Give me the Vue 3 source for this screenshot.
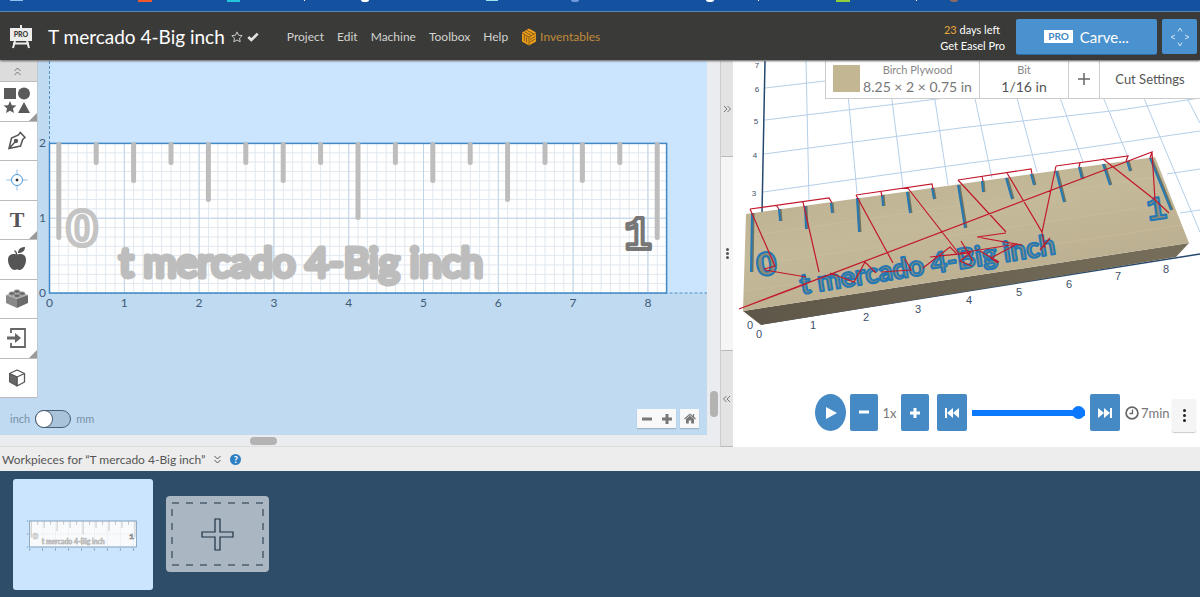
<script setup>
import { ref } from 'vue'

const title = 'T mercado 4-Big inch'
const menu = ['Project', 'Edit', 'Machine', 'Toolbox', 'Help']
const metric = ref(false)
const progress = ref(100)

const X0 = 49.5
const Y0 = 232
const UNIT = 74.8
const TOP = Y0 - 2 * UNIT

const minorX = Array.from({ length: 65 }, (_, i) => X0 + ((i + 1) * UNIT) / 8)
const minorY = Array.from({ length: 15 }, (_, i) => Y0 - ((i + 1) * UNIT) / 8)
const majorX = Array.from({ length: 8 }, (_, i) => X0 + (i + 1) * UNIT)
const lengths = [97, 22, 40, 22, 59, 22, 40, 22, 77, 22, 40, 22, 59, 22, 40, 22, 97]
const marks = lengths.map((l, i) => ({ x: 58.8 + i * 37.4, end: TOP + l - 3 }))

const sceneGrid = [
  'M32 27L92 20', 'M32 59L237 34', 'M31 93L227 67L387 49L467 37', 'M30 131L237 102L344 88L467 70',
  'M434 113L467 108', 'M447 152L467 149', 'M73 0L76 139', 'M112 0L124 132', 'M154 0L170 126',
  'M196 0L215 124', 'M234 0L259 117', 'M274 0L304 111', 'M314 0L350 101', 'M355 0L395 96',
  'M397 0L411 37L427 76L467 171', 'M436 0L454 37L467 62'
].join('')
const cuts = [
  'M19 152L18 211', 'M46 148L47 160', 'M72 145L73 168', 'M98 142L99 152', 'M124 137L126 171',
  'M149 134L150 145', 'M174 131L177 152', 'M199 127L201 138', 'M225 124L232 167', 'M249 120L250 131',
  'M273 117L279 138', 'M298 113L301 124', 'M323 110L331 141', 'M346 106L349 118', 'M370 103L377 124',
  'M394 100L397 110', 'M417 97L438 149'
].join('')
const travel = [
  'M6 248L419 91L417 97', 'M6 248L73 223', 'M17 148L96 137L99 142', 'M43 144L46 148', 'M17 148L42 205L31 208',
  'M32 209L73 216', 'M70 141L86 211', 'M123 134L199 123L200 128', 'M148 131L149 135', 'M123 134L160 202',
  'M174 126L227 194', 'M225 119L298 108L299 113', 'M249 115L250 120', 'M225 119L273 171', 'M274 112L309 171L323 105',
  'M323 105L395 95L393 100', 'M347 102L346 106', 'M370 98L422 139L436 152', 'M419 91L422 139',
  'M97 212L121 221L132 201L143 212', 'M148 211L178 209L172 198', 'M190 207L217 186L224 193L197 196',
  'M197 196L237 192L227 200L239 205', 'M244 176L273 172L244 176L289 184', 'M227 192L284 183L258 197L265 202',
  'M228 180L240 200', 'M307 189L317 177', 'M309 171L312 187', 'M247 190L266 201'
].join('')
const heights = [
  { n: 7, x: 24, y: 7 }, { n: 6, x: 24, y: 31 }, { n: 5, x: 23, y: 63 }, { n: 4, x: 22, y: 97 }, { n: 3, x: 21, y: 135 }
]
const widths = [
  { n: 0, x: 17, y: 268 }, { n: 0, x: 26, y: 277 }, { n: 1, x: 80, y: 268 }, { n: 2, x: 133, y: 260 },
  { n: 3, x: 185, y: 252 }, { n: 4, x: 236, y: 243 }, { n: 5, x: 286, y: 235 }, { n: 6, x: 336, y: 227 },
  { n: 7, x: 385, y: 219 }, { n: 8, x: 433, y: 212 }
]
</script>

<template>
  <div class="app">
    <div class="strip" aria-hidden="true">
      <svg width="100%" height="12">
        <rect x="10" width="13" height="1" fill="#8fc2ee" />
        <rect x="138" width="14" height="2" fill="#f2562b" />
        <rect x="227" width="13" height="2" fill="#21c7d8" />
        <ellipse cx="365" cy="0" rx="4" ry="2" fill="#fff" />
        <rect x="304" width="1" height="1" fill="#fff" />
        <rect x="486" width="12" height="1" fill="#9ee0ec" />
        <ellipse cx="575" cy="0" rx="4" ry="2" fill="#6f9ae0" />
        <ellipse cx="710" cy="0" rx="4" ry="2" fill="#fff" />
        <rect x="758" width="1" height="1" fill="#fff" />
        <rect x="836" width="14" height="2" fill="#8fcf3c" />
        <rect x="916" width="1" height="1" fill="#fff" />
        <ellipse cx="954" cy="0" rx="4" ry="2" fill="#8a6a62" />
      </svg>
    </div>

    <header class="header">
      <svg class="logo" width="24" height="26" viewBox="0 0 24 26">
        <path d="M11 1h2v4h-2zM1 4h22v13H1zM4 18.500h16v2H4z" fill="#ededeb" />
        <path d="M6 17L4 24M18 17l2 7" stroke="#ededeb" stroke-width="2" />
        <text x="12" y="13" text-anchor="middle" class="logo-text">PRO</text>
      </svg>
      <h1 class="title">{{ title }}</h1>
      <button class="plain" aria-label="Favorite">
        <svg width="12" height="12" viewBox="0 0 12 12"><path d="M6 .9l1.500 3.300 3.700.4-2.700 2.500.7 3.700L6 9l-3.200 1.800.7-3.700L.8 4.600l3.700-.4z" fill="none" stroke="#c9c9c7" /></svg>
      </button>
      <svg class="check" width="12" height="10" viewBox="0 0 12 10"><path d="M1.300 5l3 3L10.700 1.600" fill="none" stroke="#e4e4e2" stroke-width="2.600" /></svg>
      <nav class="menu">
        <a v-for="m in menu" :key="m" href="#">{{ m }}</a>
        <a href="#" class="brand">
          <svg width="16" height="18" viewBox="0 0 16 18">
            <path d="M8 .5l7 4v9l-7 4-7-4v-9z" fill="#f0a018" />
            <path d="M8 9v8M8 9l7-4M8 9L1 5M3.300 7v6M5.600 8.500v6M3.500 3.600l6.500 3.700M6 2.300l6.500 3.600M9 11.500l5.500-3.200M9 14l5.500-3.200" stroke="#65481d" stroke-width=".8" fill="none" />
          </svg>
          <span>Inventables</span>
        </a>
      </nav>
      <div class="trial">
        <span><b>23</b> days left</span>
        <a href="#">Get Easel Pro</a>
      </div>
      <button class="carve"><span class="badge">PRO</span>Carve...</button>
      <button class="jog" aria-label="Jog machine">
        <svg width="20" height="20" viewBox="0 0 20 20"><path d="M8 4.500l2-3.500 2 3.500M8 15.500l2 3.500 2-3.500M5 8l-4 2 4 2M15 8l4 2-4 2" fill="none" stroke="#cde4f7" /></svg>
      </button>
    </header>

    <main class="work">
      <section class="editor">
        <div class="canvas">
          <svg class="drawing" width="100%" height="100%">
            <rect :x="X0" y="0" width="100%" :height="Y0" fill="#cbe5ff" />
            <path :d="`M${X0} 0V${TOP}`" class="guide" />
            <line :x1="X0" :x2="'100%'" :y1="Y0" :y2="Y0" class="guide" />
            <g id="board">
              <rect :x="X0" :y="TOP" :width="8.25 * UNIT" :height="2 * UNIT" fill="#fff" />
              <path v-for="x in minorX" :key="'x' + x" :d="`M${x} ${TOP}V${Y0}`" class="minor" />
              <path v-for="y in minorY" :key="'y' + y" :d="`M${X0} ${y}H${X0 + 8.25 * UNIT}`" class="minor" />
              <path v-for="x in majorX" :key="'m' + x" :d="`M${x} ${TOP}V${Y0}`" class="major" />
              <path :d="`M${X0} ${Y0 - UNIT}H${X0 + 8.25 * UNIT}`" class="major" />
              <rect :x="X0" :y="TOP" :width="8.25 * UNIT" :height="2 * UNIT" class="edge" />
              <path v-for="m in marks" :key="m.x" :d="`M${m.x} ${TOP + 1}V${m.end}`" class="mark" />
              <text x="82" y="184" text-anchor="middle" class="zero">0</text>
              <text x="638" y="188" text-anchor="middle" class="one">1</text>
              <text x="301" y="216" text-anchor="middle" class="carved">t mercado 4-Big inch</text>
            </g>
            <g class="axis">
              <text v-for="n in 9" :key="n" :x="X0 + (n - 1) * UNIT" :y="Y0 + 14" text-anchor="middle">{{ n - 1 }}</text>
              <text v-for="n in 3" :key="'v' + n" x="46" :y="Y0 - (n - 1) * UNIT + 4" text-anchor="end">{{ n - 1 }}</text>
            </g>
          </svg>

          <div class="tools">
            <button class="collapse" aria-label="Collapse tools">
              <svg width="9" height="9" viewBox="0 0 9 9"><path d="M1.500 4l3-3 3 3M1.500 8l3-3 3 3" fill="none" stroke="#777" /></svg>
            </button>
            <button class="more" aria-label="Shapes">
              <svg width="28" height="28" viewBox="0 0 28 28" fill="#5a5a5a"><path d="M1 1h12v11H1zM21 15l6 11H15zM7 14l1.800 4.200 4.600.4-3.500 3 1.100 4.500L7 23.700l-4 2.400 1.100-4.500-3.500-3 4.600-.4z" /><circle cx="21" cy="6.500" r="6" /></svg>
            </button>
            <button aria-label="Pen">
              <svg width="20" height="20" viewBox="0 0 20 20" fill="none" stroke="#555" stroke-width="1.500"><path d="M2 17.500L4.500 7l7-3 1.800-2.500L18 6.500 15.700 8.500l-2.200 6.500zM2 17.500l6-6.500" /><circle cx="9" cy="10" r="1.400" fill="#555" /></svg>
            </button>
            <button aria-label="Point">
              <svg width="22" height="22" viewBox="0 0 22 22" fill="none" stroke="#4b97d8"><circle cx="11" cy="11" r="5.500" /><path d="M11 .5v5M11 16.500v5M.5 11h5M16.500 11h5" opacity=".6" /><circle cx="11" cy="11" r="1" fill="#222" stroke="#222" /></svg>
            </button>
            <button class="more letter" aria-label="Text">T</button>
            <button aria-label="Icons">
              <svg width="20" height="26" viewBox="0 0 20 26" fill="#555"><path d="M10 9c2-1.500 9-2 9 5 0 5-3.500 10-6.500 10-1 0-1.500-.5-2.500-.5S8.500 24 7.500 24C4.500 24 1 19 1 14c0-7 7-6.500 9-5z" /><path d="M11 7c0-4 3-6 7-6 0 4-3 6-7 6z" /><path d="M10 9C9.500 7 9 5.500 7.500 4.500" fill="none" stroke="#555" stroke-width="1.500" /></svg>
            </button>
            <button aria-label="Apps">
              <svg width="24" height="20" viewBox="0 0 24 20"><path d="M1 6l11-4 11 4-11 4z" fill="#aaa" /><path d="M1 6l11 4v9L1 14z" fill="#888" /><path d="M23 6l-11 4v9l11-5z" fill="#6a6a6a" /><g fill="#666" stroke="#aaa" stroke-width=".7"><ellipse cx="12" cy="2.500" rx="3" ry="1.700" /><ellipse cx="7" cy="4.500" rx="3" ry="1.700" /><ellipse cx="17" cy="4.500" rx="3" ry="1.700" /><ellipse cx="12" cy="6.800" rx="3" ry="1.700" /></g></svg>
            </button>
            <button class="more" aria-label="Import">
              <svg width="20" height="20" viewBox="0 0 20 20"><path d="M4 5V1h14v18H4v-4" fill="none" stroke="#666" stroke-width="1.800" /><path d="M0 8.500h8V5l6 5-6 5v-3.500H0z" fill="#666" /></svg>
            </button>
            <button aria-label="3D">
              <svg width="18" height="18" viewBox="0 0 18 18"><path d="M9 1l7.500 3.500L9 8 1.500 4.500zM9 8v9l7.500-4V4.500" fill="#fff" stroke="#555" stroke-width="1.300" stroke-linejoin="round" /><path d="M1.500 4.500L9 8v9l-7.500-4z" fill="#666" stroke="#555" /></svg>
            </button>
          </div>

          <label class="units"><span>inch</span><input v-model="metric" type="checkbox" role="switch" /><span>mm</span></label>

          <div class="zoom">
            <div class="pair">
              <button aria-label="Zoom out"><svg width="10" height="10"><path d="M0 5h10" stroke="#777" stroke-width="3" /></svg></button>
              <button aria-label="Zoom in"><svg width="10" height="10"><path d="M0 5h10M5 0v10" stroke="#777" stroke-width="3" /></svg></button>
            </div>
            <button aria-label="Zoom home"><svg width="12" height="11" viewBox="0 0 12 11" fill="#777"><path d="M2 6l4-3.300L10 6v4.500H7.200V7.500H4.800v3H2z" /><path d="M.5 6L6 1.300 11.500 6M9.500 1v3" fill="none" stroke="#777" stroke-width="1.200" /></svg></button>
          </div>
        </div>
        <div class="vscroll"><i></i></div>
        <div class="hscroll"><i></i></div>
      </section>

      <div class="divider">
        <button class="end" aria-label="Expand editor"><svg width="8" height="8" viewBox="0 0 8 8"><path d="M1 1l3 3-3 3M4.500 1l3 3-3 3" fill="none" stroke="#777" /></svg></button>
        <div class="grip"><i></i><i></i><i></i></div>
        <button class="end" aria-label="Expand preview"><svg width="8" height="8" viewBox="0 0 8 8"><path d="M3.500 1l-3 3 3 3M7 1L4 4l3 3" fill="none" stroke="#777" /></svg></button>
      </div>

      <section class="preview">
        <svg class="scene" width="100%" height="100%">
          <defs>
            <linearGradient id="top" x1="0" y1="0" x2=".6" y2="1"><stop offset="0" stop-color="#b9ad8d" /><stop offset=".5" stop-color="#c4b999" /><stop offset="1" stop-color="#b8ac8e" /></linearGradient>
            <linearGradient id="side" x1="0" x2="1"><stop offset="0" stop-color="#5e5749" /><stop offset="1" stop-color="#776e5a" /></linearGradient>
          </defs>
          <path :d="sceneGrid" fill="none" stroke="#b5cfe8" />
          <path d="M32 0L29 152M28 263L467 193" stroke="#24486e" stroke-width="1.500" />
          <path d="M10 250L456 182L443 196L28 264z" fill="url(#side)" />
          <path d="M13 153L422 96L456 182L10 250z" fill="url(#top)" />
          <path d="M16 175L429 115M14 205L440 142M12 230L449 164" stroke="#d4c8aa" opacity=".35" />
          <path :d="cuts" stroke="#6f7463" stroke-width="3" transform="translate(1 0)" />
          <path :d="cuts" stroke="#2679b3" stroke-width="2" />
          <g class="engraved">
            <text x="35" y="214" text-anchor="middle" transform="rotate(-8 35 214)" class="e-zero">0</text>
            <text x="425" y="158" text-anchor="middle" transform="rotate(-8 425 158)" class="e-one">1</text>
            <text x="196" y="213" text-anchor="middle" transform="rotate(-9 196 213)" class="e-name">t mercado 4-Big inch</text>
          </g>
          <path :d="travel" fill="none" stroke="#c2182b" stroke-width="1.200" />
          <g class="ticks">
            <text v-for="h in heights" :key="h.n" :x="h.x" :y="h.y" text-anchor="middle" class="small">{{ h.n }}</text>
            <text v-for="w in widths" :key="w.x" :x="w.x" :y="w.y" text-anchor="middle">{{ w.n }}</text>
          </g>
        </svg>

        <div class="setup">
          <button class="material"><i class="swatch"></i><span><small>Birch Plywood</small><strong>8.25 × 2 × 0.75 in</strong></span></button>
          <button class="bit"><small>Bit</small><strong>1/16 in</strong></button>
          <button class="add-bit" aria-label="Add bit"><svg width="12" height="12"><path d="M0 6h12M6 0v12" stroke="#666" stroke-width="1.500" /></svg></button>
          <button class="cut">Cut Settings</button>
        </div>

        <div class="player">
          <button class="play" aria-label="Play"><svg width="12" height="12"><path d="M1 0l11 6-11 6z" fill="#fff" /></svg></button>
          <button aria-label="Slower"><svg width="10" height="10"><path d="M0 4h10" stroke="#fff" stroke-width="3" /></svg></button>
          <span class="speed">1x</span>
          <button aria-label="Faster"><svg width="10" height="10"><path d="M0 5h10M5 0v10" stroke="#fff" stroke-width="3" /></svg></button>
          <button class="wide" aria-label="To start"><svg width="14" height="12"><path d="M0 1h2v10H0zM8 1v10L2 6zM14 1v10L8 6z" fill="#fff" /></svg></button>
          <input v-model="progress" type="range" min="0" max="100" aria-label="Progress" />
          <button class="ff" aria-label="To end"><svg width="14" height="12"><path d="M12 1h2v10h-2zM6 1v10l6-5zM0 1v10l6-5z" fill="#fff" /></svg></button>
          <svg class="clock" width="14" height="14" viewBox="0 0 14 14" fill="none" stroke="#666"><circle cx="7" cy="7" r="5.900" stroke-width="1.700" /><path d="M7.500 3.500v4h-3" stroke-width="1.300" /></svg>
          <span class="time">7min</span>
          <button class="kebab" aria-label="More"><i></i><i></i><i></i></button>
        </div>
      </section>
    </main>

    <div class="pieces-bar">
      <span>Workpieces for “T mercado 4-Big inch”</span>
      <button class="plain" aria-label="Toggle workpieces"><svg width="9" height="9" viewBox="0 0 9 9"><path d="M1.500 1l3 3 3-3M1.500 5l3 3 3-3" fill="none" stroke="#555" /></svg></button>
      <button class="help" aria-label="Help">?</button>
    </div>

    <footer class="pieces">
      <button class="thumb" aria-label="Workpiece 1">
        <svg width="140" height="111" viewBox="-46 -160 807 640"><use href="#board" /><path d="M42 82.400h-8M42 157h-8M42 232h-8M50 240v12M124 240v12M199 240v12M274 240v12M349 240v12M423 240v12M498 240v12M573 240v12M648 240v12" stroke="#7b97b5" stroke-width="6" /><rect x="49" y="82" width="617" height="150" fill="none" stroke="#8ba5bb" stroke-width="5" /></svg>
      </button>
      <button class="new" aria-label="Add workpiece">
        <svg width="103" height="76" viewBox="0 0 103 76" fill="none" stroke="#1d3042"><path d="M6 7h92M6 69h92" stroke-dasharray="7 7" /><path d="M6 13v56M97 13v56" stroke-dasharray="7 7" /><path d="M49 23h5v13h13v5H54v13h-5V41H36v-5h13z" stroke-width="1.200" /></svg>
      </button>
    </footer>
  </div>
</template>

<style>
html, body, #app { height: 100%; }
body { margin: 0; overflow: hidden; }
</style>

<style scoped>
* { box-sizing: border-box; }
.app { height: 100%; display: flex; flex-direction: column; font-family: Lato, "Liberation Sans", sans-serif; color: #555; background: #fff; }
button { font: inherit; color: inherit; border: 0; padding: 0; margin: 0; background: none; display: flex; align-items: center; justify-content: center; cursor: pointer; }
a { color: inherit; text-decoration: none; }
svg { display: block; flex: none; }
.strip { height: 12px; background: #14529f; border-bottom: 1px solid #5b8ac0; }
.header { height: 48px; display: flex; align-items: center; padding: 1px 3px 0 9px; color: #d2d2d0; background: #3a3b38; box-shadow: 0 1px 2px #555; position: relative; z-index: 2; }
.logo-text { font: 900 7px Lato, sans-serif; fill: #3a3b38; }
.title { margin: 0 6px 0 15px; font-size: 19px; line-height: 24px; font-weight: 400; color: #fff; white-space: nowrap; }
.check { margin-left: 4px; }
.menu { display: flex; align-items: center; gap: 13px; margin-left: 28px; font-size: 12px; white-space: nowrap; }
.brand { display: flex; align-items: center; gap: 3px; color: #c08b3a; }
.trial { margin-left: auto; margin-right: 11px; padding-top: 2px; display: flex; flex-direction: column; align-items: flex-end; font-size: 11px; line-height: 16px; color: #fff; white-space: nowrap; }
.trial span { margin-right: 5px; }
.trial b { font-weight: 400; color: #e8a33d; }
.carve { width: 141px; height: 35px; gap: 7px; font-size: 15px; color: #fff; background: #4a92cf; box-shadow: 0 1px 0 #2b6da5; border-radius: 2px; }
.badge { padding: 0 4px; line-height: 13px; font-size: 10px; font-weight: 700; color: #3f86c4; background: #fff; }
.jog { width: 35px; height: 35px; margin-left: 5px; background: #4a92cf; border-radius: 2px; }
.work { flex: 1; min-height: 0; display: flex; padding-top: 1px; }
.editor { flex: 720; min-width: 0; display: grid; grid-template: minmax(0, 1fr) 12px / minmax(0, 1fr) 13px; background: #ebecef; }
.canvas { position: relative; background: #c0daf1; overflow: hidden; display: flex; flex-direction: column; align-items: flex-start; }
.drawing { position: absolute; inset: 0; }
.guide { stroke: #4f8fc4; stroke-dasharray: 3 2; }
.minor { stroke: #e1e8ef; stroke-width: 1; }
.major { stroke: #c0d4e8; stroke-width: 1; }
.edge { fill: none; stroke: #4189c4; stroke-width: 1.500; }
.mark { stroke: #bdbdbd; stroke-width: 5; stroke-linecap: round; }
.zero { font: 700 46px "DejaVu Sans", sans-serif; fill: #fff; stroke: #c4c4c4; stroke-width: 5; stroke-linejoin: round; }
.one { font: 700 46px "Liberation Mono", monospace; fill: #fff; stroke: #777; stroke-width: 4; stroke-linejoin: round; }
.carved { font: 400 40px Lato, sans-serif; fill: #bdbdbd; stroke: #bdbdbd; stroke-width: 5; stroke-linejoin: round; }
.axis text { font: 12px Lato, sans-serif; fill: #3f5b78; }
.tools { position: relative; width: 38px; height: 337px; display: grid; grid-template-rows: 21px repeat(8, 1fr); background: #fff; border-right: 1px solid #c2c8ce; }
.tools button { position: relative; padding-right: 3px; border-bottom: 1px solid #bbb; }
.tools .collapse { background: #dcdcdc; }
.more::after { content: ""; position: absolute; right: 0; bottom: 0; border: 4px solid transparent; border-right-color: #999; border-bottom-color: #999; }
.tools .letter { font: 700 22px "Liberation Serif", serif; color: #555; }
.units { position: relative; display: flex; align-items: center; gap: 5px; margin: 12px 0 0 10px; font-size: 11px; line-height: 18px; color: #7890a5; }
.units input { appearance: none; margin: 0; width: 36px; height: 18px; border: 1px solid #4c6073; border-radius: 9px; background: #a9c3da; display: flex; }
.units input::before { content: ""; width: 16px; height: 16px; border-radius: 50%; background: #fff; box-shadow: 0 0 0 1px #4c6073; }
.units input:checked::before { margin-left: auto; }
.zoom { position: absolute; right: 8px; bottom: 7px; display: flex; gap: 4px; }
.zoom button { width: 19px; height: 19px; }
.pair, .zoom > button { display: flex; background: #f8f8f8; box-shadow: 0 1px 1px #9db3c6; }
.pair { width: 39px; justify-content: space-between; }
.vscroll { display: flex; flex-direction: column; justify-content: flex-end; align-items: center; padding-bottom: 18px; }
.vscroll i { width: 8px; height: 26px; border-radius: 4px; background: #b3b3b3; }
.hscroll { grid-column: 1 / 3; display: flex; align-items: center; padding-left: 250px; border-bottom: 1px solid #dedede; }
.hscroll i { width: 27px; height: 8px; border-radius: 4px; background: #b3b3b3; }
.divider { width: 13px; display: flex; flex-direction: column; background: #f5f5f5; border-left: 1px solid #ccc; }
.end { height: 96px; background: #e3e3e3; border-bottom: 1px solid #bbb; }
.grip { flex: 1; display: flex; flex-direction: column; align-items: center; justify-content: center; gap: 1px; border-bottom: 1px solid #bbb; }
.grip i, .kebab i { width: 3px; height: 3px; border-radius: 50%; background: #555; }
.preview { flex: 467; min-width: 0; position: relative; display: flex; flex-direction: column; justify-content: space-between; overflow: hidden; }
.scene { position: absolute; inset: 0; }
.e-name, .e-zero, .e-one { fill: #8f8d78; stroke: #2478b4; stroke-width: 2; stroke-linejoin: round; }
.e-name { font: 700 28px Lato, sans-serif; }
.e-zero { font: 700 31px "DejaVu Sans", sans-serif; }
.e-one { font: 700 33px "Liberation Mono", monospace; }
.ticks text { font: 11px "Liberation Sans", sans-serif; fill: #3c5068; }
.ticks .small { font-size: 8px; }
.setup { position: relative; align-self: flex-end; display: flex; height: 38px; background: #fff; border: 1px solid #ccc; border-width: 0 0 1px 1px; }
.setup button { padding-bottom: 2px; }
.setup button + button { border-left: 1px solid #ccc; }
.setup small, .setup strong { display: block; text-align: center; font-weight: 400; white-space: nowrap; }
.setup small { font-size: 11px; line-height: 16px; color: #888; }
.setup strong { font-size: 14px; line-height: 18px; color: #777; }
.material { width: 153px; gap: 3px; }
.swatch { width: 27px; height: 27px; background: #c3b793; }
.setup .bit { width: 89px; flex-direction: column; }
.setup .bit strong { color: #555; }
.add-bit { width: 31px; }
.cut { width: 101px; font-size: 13px; white-space: nowrap; }
.player { position: relative; display: flex; align-items: center; height: 37px; margin: 0 4px 16px 82px; color: #777; }
.player button { width: 28px; height: 37px; flex: none; background: #458ac5; border-radius: 2px; }
.player .play { width: 31px; border-radius: 50%; margin-right: 4px; }
.speed { width: 23px; text-align: center; font-size: 13px; }
.player .wide { width: 30px; margin-left: 8px; }
.player .ff { width: 30px; }
.player input { appearance: none; flex: 1; min-width: 0; height: 13px; margin: 0 5px; background: linear-gradient(#0a78ff, #0a78ff) center / 100% 6px no-repeat; border-radius: 4px; }
.player input::-webkit-slider-thumb { appearance: none; width: 13px; height: 13px; border-radius: 50%; background: #0a78ff; }
.clock { margin: 0 2px 0 5px; }
.time { width: 31px; font-size: 13px; }
.player .kebab { width: 24px; height: 33px; margin-top: 6px; flex-direction: column; gap: 2px; background: #f5f5f5; box-shadow: 0 1px 1px #ccc; }
.kebab i { background: #222; }
.pieces-bar { height: 24px; display: flex; align-items: center; gap: 8px; padding-left: 2px; font-size: 12px; white-space: nowrap; background: #ededed; }
.help { width: 11px; height: 11px; border-radius: 50%; background: #2f80c3; color: #fff; font-size: 9px; font-weight: 900; }
.pieces { height: 126px; display: flex; align-items: center; gap: 13px; padding: 0 13px; background: #2d4d68; }
.thumb { width: 140px; height: 111px; overflow: hidden; border-radius: 3px; background: #cbe5ff; }
.new { width: 103px; height: 76px; border-radius: 4px; background: #aab6c2; border: 0; }
</style>
